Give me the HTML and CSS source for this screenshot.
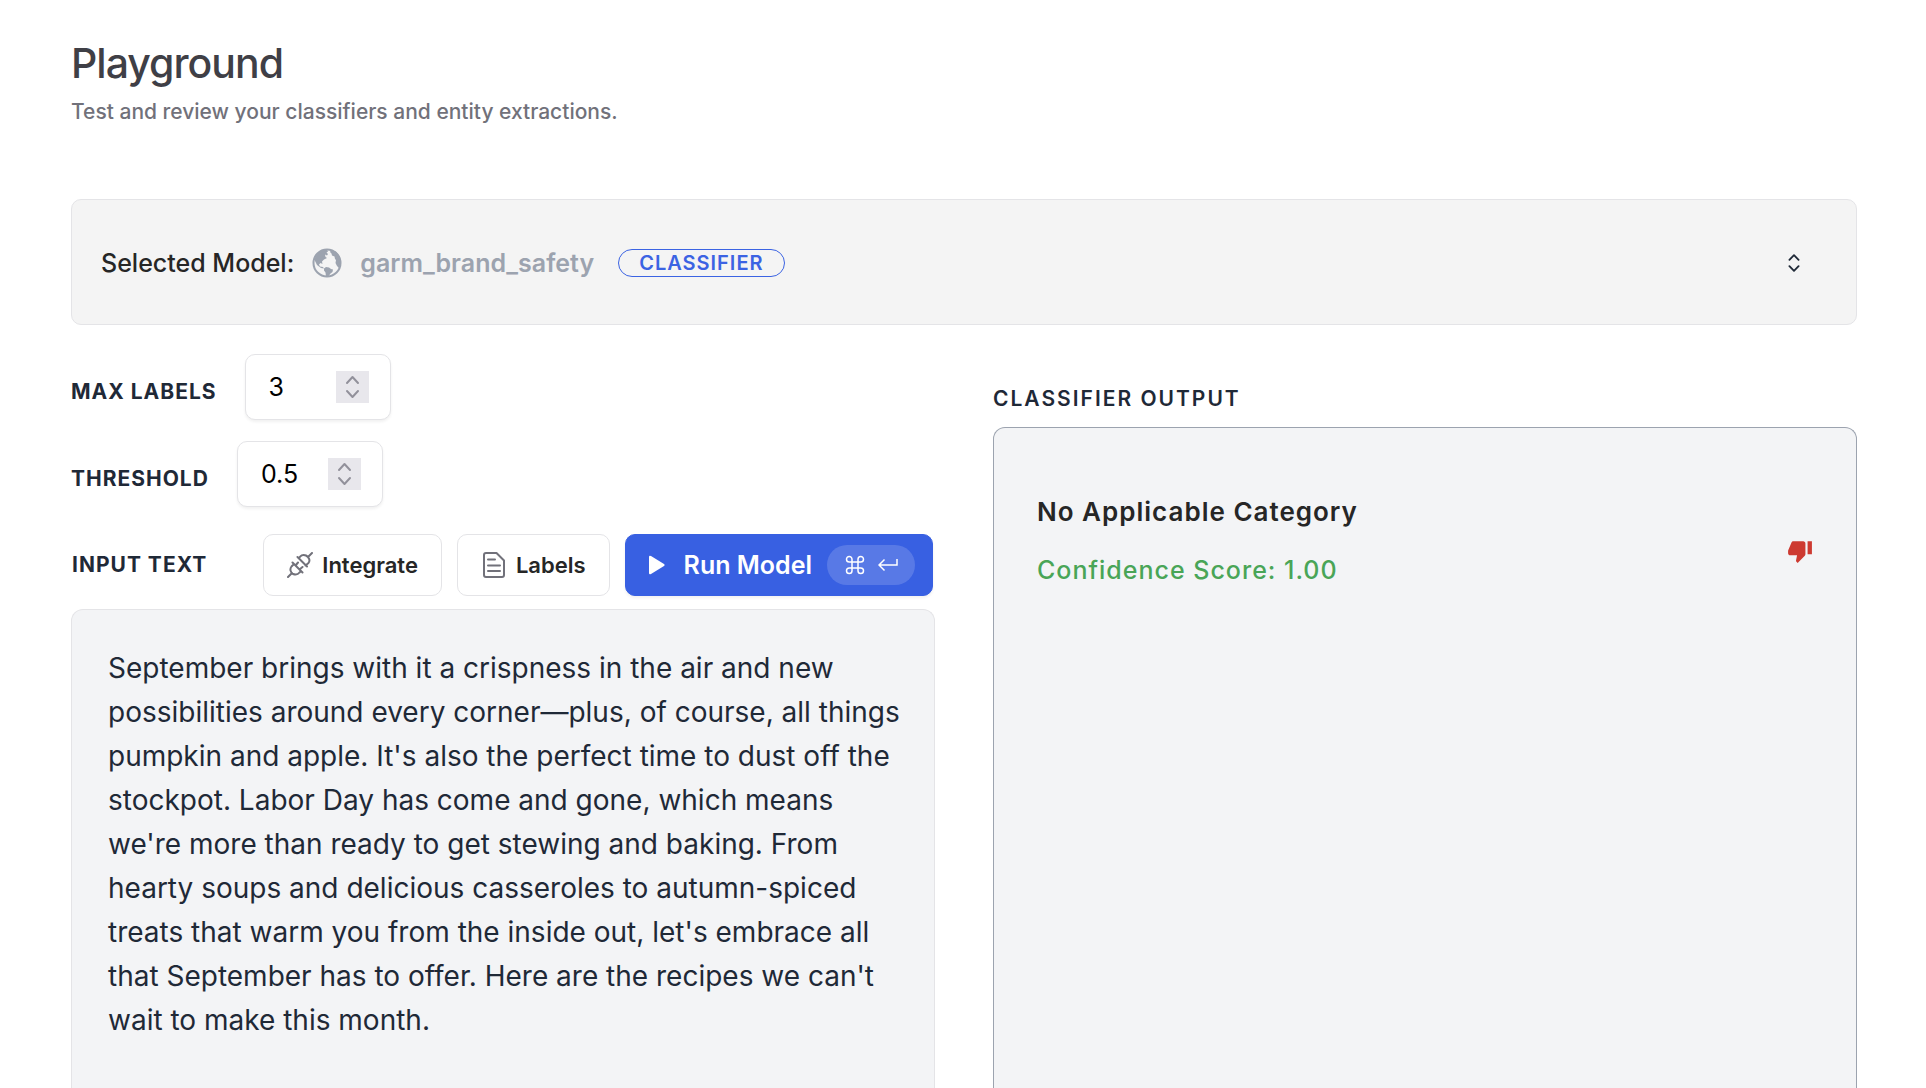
FILE: index.html
```html
<!DOCTYPE html>
<html lang="en">
<head>
<meta charset="utf-8">
<meta name="viewport" content="width=device-width, initial-scale=1">
<title>Playground</title>
<link rel="stylesheet" href="styles.css">
</head>
<body>
<main class="page">
  <header class="page-header">
    <h1 class="title">Playground</h1>
    <p class="subtitle">Test and review your classifiers and entity extractions.</p>
  </header>

  <button class="model-picker" type="button" aria-haspopup="listbox">
    <span class="model-label">Selected Model:</span>
    <svg class="icon-globe" viewBox="0 0 30 30" aria-hidden="true">
      <circle cx="15" cy="15" r="13.500" fill="none" stroke="currentColor" stroke-width="2"/>
      <path fill="currentColor" d="M3 10L6 5l4-3 5-.500 1 2-1.500 1 1.500 1.500-1 1.500-2-1 .500 2.500 1.500 1-3 1.500-2 2 .500 2.500-2-1-1.500 1.500 1 2 3 .500 1 1.500-3-.500-4-3-2-4zM19 2l-1 2 1.500 1.500.500 2 2.500 1 .500 2.500 1 1-.500 3 1.500 3 2.500 2.500 1.500-5.500-1-6-4-5.500zM12 20.500l2-1.500 3 .500 2 1.500 2 .500-.500 2.500-2 1.500-2.500 3.500-2-.500-.500-4-1.500-2z"/>
    </svg>
    <span class="model-name">garm_brand_safety</span>
    <span class="badge">Classifier</span>
    <svg class="icon-updown" viewBox="0 0 24 24" aria-hidden="true"><path fill="none" stroke="currentColor" stroke-width="2" stroke-linecap="round" stroke-linejoin="round" d="M7 8.500l5-5 5 5M7 15.500l5 5 5-5"/></svg>
  </button>

  <div class="workspace">
    <section class="column">
      <div class="field">
        <label class="caption" for="max-labels">Max Labels</label>
        <span class="stepper">
          <input class="number" id="max-labels" type="number" value="3" min="1">
          <svg class="spin" viewBox="0 0 33 32" aria-hidden="true"><path d="M11 12l5.500-6 5.500 6M11 20l5.500 6 5.500-6"/></svg>
        </span>
      </div>
      <div class="field">
        <label class="caption" for="threshold">Threshold</label>
        <span class="stepper">
          <input class="number" id="threshold" type="number" value="0.5" step="0.1">
          <svg class="spin" viewBox="0 0 33 32" aria-hidden="true"><path d="M11 12l5.500-6 5.500 6M11 20l5.500 6 5.500-6"/></svg>
        </span>
      </div>
      <div class="toolbar">
        <label class="caption" for="input-text">Input Text</label>
        <div class="actions">
          <button class="btn" type="button">
            <svg class="icon icon-plug" viewBox="0 0 26 26" aria-hidden="true"><path d="M25 1l-4 4M10.500 5L20 14.500M12 6.500c1-3 4-4.500 7-3 3 1.500 4.500 5 2.500 7.500l-3 2.500M1 25l4-4M5.500 10.500L15.500 20.500M7 12l-2.500 2.500c-2 2.500-1 6 1.500 7.500 2.500 1 5 .500 6.500-1.500l1.500-1.500M8.500 13.500l2.500-3M12.500 17.500l3-2.500"/></svg>
            Integrate
          </button>
          <button class="btn" type="button">
            <svg class="icon" viewBox="0 0 26 26" aria-hidden="true"><path d="M15.500 1H5a2 2 0 0 0-2 2v20a2 2 0 0 0 2 2h16a2 2 0 0 0 2-2V8.500zM7 7.500h7M7 13.500h12M7 19h12"/></svg>
            Labels
          </button>
          <button class="btn btn-primary" type="button">
            <svg class="icon-play" viewBox="0 0 18 20" aria-hidden="true"><path fill="currentColor" d="M1 2v16q0 2 2 1l13-8q1.500-1 0-2L3 1q-2-1-2 1z"/></svg>
            Run Model
            <span class="keys">
              <svg class="key" viewBox="0 0 20 20" aria-hidden="true"><path d="M7 7h6v6H7zM7 7H4.250A2.750 2.750 0 1 1 7 4.250zM13 7V4.250A2.750 2.750 0 1 1 15.750 7zM13 13h2.750A2.750 2.750 0 1 1 13 15.750zM7 13v2.750A2.750 2.750 0 1 1 4.250 13z"/></svg>
              <svg class="key" viewBox="0 0 20 20" aria-hidden="true"><path d="M19 4v6H1M6.500 4.500L1 10l5.500 5.500"/></svg>
            </span>
          </button>
        </div>
      </div>
      <textarea class="input-text" id="input-text" spellcheck="false">September brings with it a crispness in the air and new possibilities around every corner—plus, of course, all things pumpkin and apple. It's also the perfect time to dust off the stockpot. Labor Day has come and gone, which means we're more than ready to get stewing and baking. From hearty soups and delicious casseroles to autumn-spiced treats that warm you from the inside out, let's embrace all that September has to offer. Here are the recipes we can't wait to make this month.</textarea>
    </section>

    <section class="column output-column">
      <h2 class="caption output-title">Classifier Output</h2>
      <div class="output">
        <div class="result">
          <h3 class="category">No Applicable Category</h3>
          <p class="score">Confidence Score: 1.00</p>
        </div>
        <button class="thumb" type="button" aria-label="Incorrect result">
          <svg class="icon-thumb" viewBox="0 0 24 24" aria-hidden="true"><path fill="currentColor" d="M15 3H6c-.83 0-1.540.5-1.840 1.220l-3.020 7.050c-.09.23-.14.470-.14.730v2c0 1.100.9 2 2 2h6.310l-.95 4.570-.03.320c0 .41.170.790.440 1.060L9.830 23l6.590-6.590c.36-.36.580-.86.580-1.410V5c0-1.100-.9-2-2-2zm4 0v12h4V3h-4z"/></svg>
        </button>
      </div>
    </section>
  </div>
</main>
</body>
</html>
```

FILE: styles.css
```css
* { box-sizing: border-box; }

body {
  margin: 0;
  background: #fff;
  color: #1f2937;
  font-family: Inter, "Liberation Sans", sans-serif;
}

h1, h2, h3, p { margin: 0; }
button, input, textarea { font: inherit; color: inherit; }
button { cursor: pointer; }

.page {
  display: flex;
  flex-direction: column;
  min-height: 100vh;
  padding: 36px 69px 0 71px;
}

.title {
  color: #3f3f46;
  font-size: 41px;
  font-weight: 500;
  line-height: 54px;
  letter-spacing: -1px;
}

.subtitle {
  margin-top: 8px;
  color: #71717a;
  font-size: 21px;
  font-weight: 500;
  line-height: 28px;
}

.model-picker {
  display: flex;
  align-items: center;
  margin-top: 73px;
  height: 126px;
  padding: 2px 51px 0 29px;
  border: 1px solid #e4e4e7;
  border-radius: 10px;
  background: #f4f4f4;
  font-size: 25px;
  font-weight: 500;
}

.model-label { color: #262626; }
.icon-globe { width: 30px; height: 30px; margin: 0 18px; color: #9ca3af; }
.model-name { color: #9ca3af; font-weight: 600; }

.badge {
  margin-left: 24px;
  padding: 0 20px;
  border: 1px solid #3b63e3;
  border-radius: 14px;
  color: #3b63e3;
  font-size: 20px;
  font-weight: 600;
  line-height: 26px;
  letter-spacing: 1px;
  text-transform: uppercase;
}

.icon-updown { width: 22px; height: 22px; margin-left: auto; color: #1f2937; }

.workspace {
  display: grid;
  grid-template-columns: 1fr 1fr;
  gap: 58px;
  flex: 1;
  margin-top: 29px;
}

.column { display: flex; flex-direction: column; }

.caption {
  color: #1f2937;
  font-size: 21px;
  font-weight: 700;
  line-height: 28px;
  letter-spacing: 1px;
  text-transform: uppercase;
}

.field {
  display: flex;
  align-items: center;
  gap: 28px;
  height: 66px;
  margin-bottom: 21px;
}

.field .caption { padding-top: 10px; }

.stepper { position: relative; }

.number {
  display: block;
  width: 146px;
  height: 66px;
  padding: 0 60px 0 23px;
  border: 1px solid #e4e4e7;
  border-radius: 10px;
  background: #fff;
  box-shadow: 0 2px 3px rgb(0 0 0 / 6%);
  color: #000;
  font-size: 25px;
  appearance: textfield;
}

.spin {
  position: absolute;
  top: 17px;
  right: 22px;
  width: 33px;
  height: 32px;
  background: #e8e7ec;
  fill: none;
  stroke: #92919b;
  stroke-width: 2;
  stroke-linecap: round;
  stroke-linejoin: round;
}

.toolbar {
  display: flex;
  align-items: center;
  justify-content: space-between;
  margin-top: 6px;
  padding: 0 2px 0 1px;
}

.actions { display: flex; gap: 15px; }

.btn {
  display: flex;
  align-items: center;
  gap: 9px;
  height: 62px;
  padding: 0 23px;
  border: 1px solid #e4e4e7;
  border-radius: 10px;
  background: #fff;
  color: #262626;
  font-size: 22px;
  font-weight: 600;
}

.icon {
  width: 26px;
  height: 26px;
  fill: none;
  stroke: #71717a;
  stroke-width: 2;
  stroke-linecap: round;
  stroke-linejoin: round;
}

.btn-primary {
  gap: 15px;
  padding: 0 17px 0 22px;
  border-color: #3860e2;
  background: #3860e2;
  box-shadow: 0 2px 3px rgb(0 0 0 / 6%);
  color: #fff;
  font-size: 25px;
}

.icon-play { width: 18px; height: 20px; margin-right: 3px; }

.keys {
  display: flex;
  align-items: center;
  justify-content: center;
  gap: 13px;
  width: 88px;
  height: 40px;
  border-radius: 20px;
  background: rgb(255 255 255 / 16%);
}

.key {
  width: 20px;
  height: 20px;
  fill: none;
  stroke: currentColor;
  stroke-width: 1.5;
}

.input-text {
  flex: 1;
  margin-top: 13px;
  padding: 36px 32px 0 36px;
  border: 1px solid #e4e4e7;
  border-bottom: 0;
  border-radius: 12px 12px 0 0;
  background: #f3f4f6;
  color: #1f2937;
  font-size: 28px;
  line-height: 44px;
  resize: none;
  overflow: hidden;
}

.output-column { padding-top: 31px; }
.output-title { font-weight: 600; letter-spacing: 2px; }

.output {
  display: flex;
  align-items: flex-start;
  justify-content: space-between;
  flex: 1;
  margin-top: 14px;
  padding: 66px 43px 0;
  border: 1px solid #9ca3af;
  border-bottom: 0;
  border-radius: 12px 12px 0 0;
  background: #f3f4f6;
}

.category {
  color: #262626;
  font-size: 26px;
  font-weight: 600;
  line-height: 36px;
  letter-spacing: 1px;
}

.score {
  margin-top: 22px;
  color: #49a557;
  font-size: 25px;
  font-weight: 500;
  line-height: 36px;
  letter-spacing: 1px;
}

.thumb {
  margin-top: 44px;
  padding: 0;
  border: 0;
  background: none;
  color: #cd3a31;
}

.icon-thumb { display: block; width: 26px; height: 26px; }
```
